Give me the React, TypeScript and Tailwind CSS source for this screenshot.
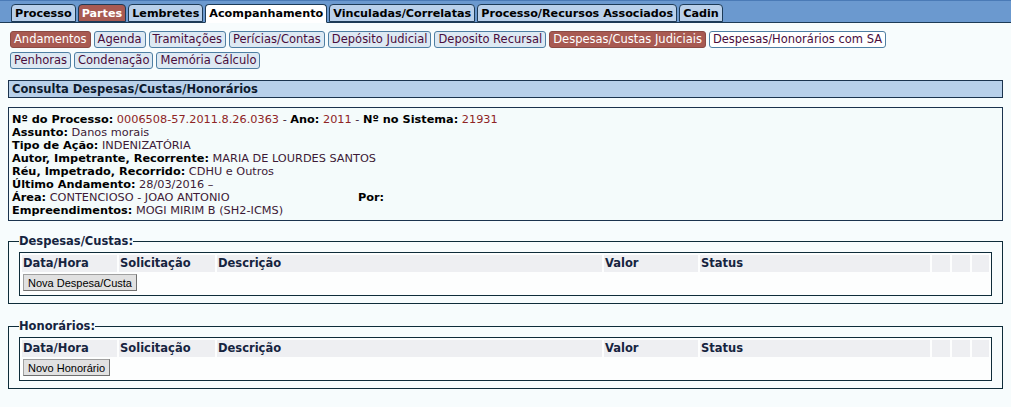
import React from 'react';

const topTabs = [
  { label: 'Processo' },
  { label: 'Partes', kind: 'red' },
  { label: 'Lembretes' },
  { label: 'Acompanhamento', kind: 'active' },
  { label: 'Vinculadas/Correlatas' },
  { label: 'Processo/Recursos Associados' },
  { label: 'Cadin' },
];

const subRow1 = [
  { label: 'Andamentos', kind: 'red' },
  { label: 'Agenda' },
  { label: 'Tramitações' },
  { label: 'Perícias/Contas' },
  { label: 'Depósito Judicial' },
  { label: 'Deposito Recursal' },
  { label: 'Despesas/Custas Judiciais', kind: 'red' },
  { label: 'Despesas/Honorários com SA', kind: 'white' },
];

const subRow2 = [{ label: 'Penhoras' }, { label: 'Condenação' }, { label: 'Memória Cálculo' }];

const TopTab = ({ label, kind }: { label: string; kind?: string }) => {
  const color =
    kind === 'red'
      ? 'bg-[#a85a52] text-white'
      : kind === 'active'
      ? 'bg-white text-black h-[19px] -mb-px border-b-white'
      : 'bg-[#b9d0ea] text-black';
  return (
    <div className={`h-[18px] px-[3px] border border-[#1d3b57] rounded-t-[4px] text-[11.2px] font-bold leading-[17px] ${color}`}>
      {label}
    </div>
  );
};

const SubTab = ({ label, kind }: { label: string; kind?: string }) => {
  const color =
    kind === 'red'
      ? 'bg-[#a85a52] text-white border-[#8a4a44]'
      : kind === 'white'
      ? 'bg-white text-[#4a0d3c] border-[#4f7fa3]'
      : 'bg-[#dde9f3] text-[#4a0d3c] border-[#4f7fa3]';
  return (
    <div className={`h-[17px] px-[3px] border rounded-[3px] text-[11.5px] leading-[15px] ${color}`}>{label}</div>
  );
};

const Field = ({ label, value, red }: { label: string; value?: string; red?: boolean }) => (
  <>
    <span className="font-bold text-black">{label}</span>{' '}
    <span className={red ? 'text-[#8e2424]' : 'text-[#3c1a36]'}>{value}</span>
  </>
);

const Fieldset = ({ title, button }: { title: string; button: string }) => (
  <fieldset className="mx-2 border border-[#0e2c3a] px-[10px] pt-[4px] pb-[7px] min-w-0">
    <legend className="text-[11.5px] font-bold text-[#16243f] px-0 ml-0 leading-[13px]">{title}</legend>
    <div className="border border-[#0e2c3a] bg-[#fdfefe] p-[2px]">
      <div className="flex gap-[2px] text-[11.5px] font-bold text-[#16243f] leading-[17px]">
        <div className="w-[95px] bg-[#eeeff2] pl-[1px]">Data/Hora</div>
        <div className="w-[96px] bg-[#eeeff2] pl-[1px]">Solicitação</div>
        <div className="w-[385px] bg-[#eeeff2] pl-[1px]">Descrição</div>
        <div className="w-[94px] bg-[#eeeff2] pl-[1px]">Valor</div>
        <div className="w-[230px] bg-[#eeeff2] pl-[1px]">Status</div>
        <div className="w-[18px] bg-[#eeeff2]" />
        <div className="w-[18px] bg-[#eeeff2]" />
        <div className="flex-1 bg-[#eeeff2]" />
      </div>
      <div className="flex pt-[2px] pb-[2px] pl-[1px]">
        <button className="h-[17px] px-[4px] bg-[#e1e1e1] border border-[#a0a0a0] border-b-[#707070] border-r-[#707070] text-[11px] leading-[14px] text-black font-['Liberation_Sans',sans-serif]">
          {button}
        </button>
      </div>
    </div>
  </fieldset>
);

export default function App() {
  return (
    <div className="w-[1011px] h-[407px] bg-[#f7fcfd] font-['DejaVu_Sans',Verdana,sans-serif] overflow-hidden">
      {/* top tabs */}
      <div className="h-[23px] bg-[#6b99cf] border-t border-t-[#4a7ab6] border-b border-b-[#1d3b57] flex items-end gap-[2px] pl-[11px]">
        {topTabs.map(t => (
          <TopTab key={t.label} {...t} />
        ))}
      </div>

      {/* sub tabs */}
      <div className="pl-[10px] pt-[8px] flex flex-col gap-[4px]">
        <div className="flex gap-[3px]">
          {subRow1.map(t => (
            <SubTab key={t.label} {...t} />
          ))}
        </div>
        <div className="flex gap-[3px]">
          {subRow2.map(t => (
            <SubTab key={t.label} {...t} />
          ))}
        </div>
      </div>

      {/* title */}
      <div className="mx-2 mt-[11px] h-[18px] bg-[#b8d0ea] border border-[#1b334e] px-[3px] text-[11.5px] font-bold leading-[16px] text-[#0d1a2e]">
        Consulta Despesas/Custas/Honorários
      </div>

      {/* info */}
      <div className="mx-2 mt-[9px] border border-[#1b334e] bg-[#f4fbfb] px-[3px] pt-[5px] pb-[3px] text-[11.3px] leading-[13px]">
        <div>
          <Field label="Nº do Processo:" value="0006508-57.2011.8.26.0363" red />{' '}
          <span className="text-[#3c1a36]">-</span> <Field label="Ano:" value="2011" red />{' '}
          <span className="text-[#3c1a36]">-</span> <Field label="Nº no Sistema:" value="21931" red />
        </div>
        <div><Field label="Assunto:" value="Danos morais" /></div>
        <div><Field label="Tipo de Ação:" value="INDENIZATÓRIA" /></div>
        <div><Field label="Autor, Impetrante, Recorrente:" value="MARIA DE LOURDES SANTOS" /></div>
        <div><Field label="Réu, Impetrado, Recorrido:" value="CDHU e Outros" /></div>
        <div><Field label="Último Andamento:" value="28/03/2016 –" /></div>
        <div className="flex">
          <div className="w-[346px]"><Field label="Área:" value="CONTENCIOSO - JOAO ANTONIO" /></div>
          <div><Field label="Por:" value="" /></div>
        </div>
        <div><Field label="Empreendimentos:" value="MOGI MIRIM B (SH2-ICMS)" /></div>
      </div>

      <div className="mt-[14px]">
        <Fieldset title="Despesas/Custas:" button="Nova Despesa/Custa" />
      </div>
      <div className="mt-[16px]">
        <Fieldset title="Honorários:" button="Novo Honorário" />
      </div>
    </div>
  );
}
